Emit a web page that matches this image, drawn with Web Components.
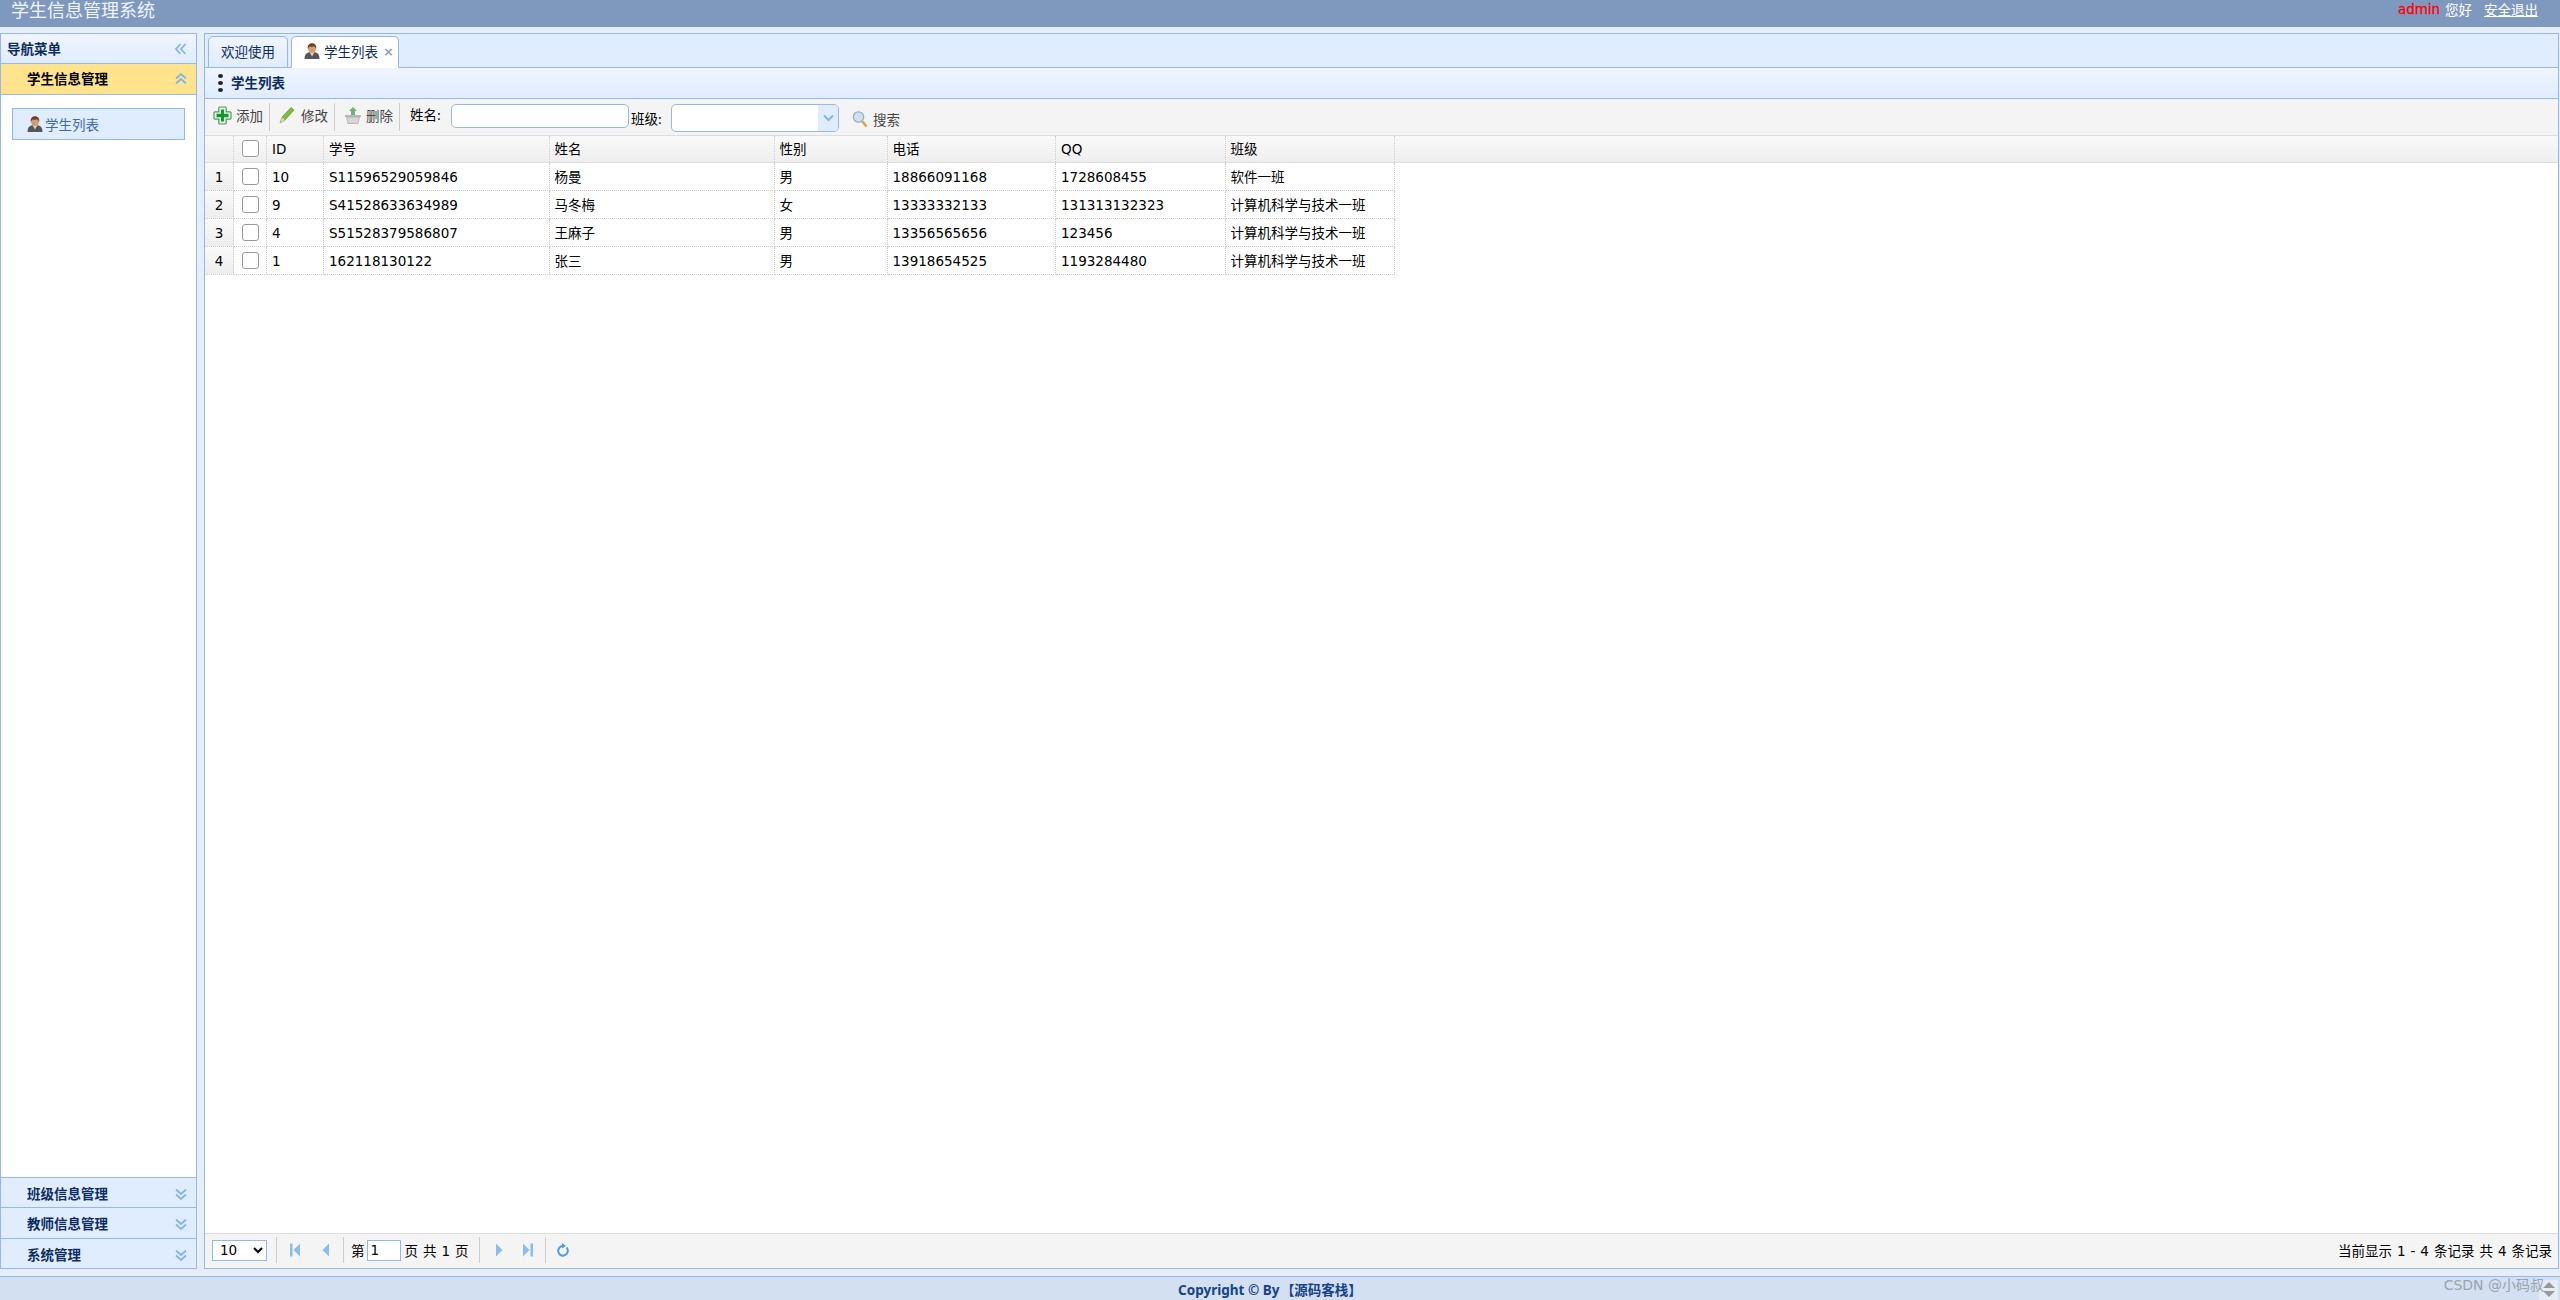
<!DOCTYPE html>
<html lang="zh"><head><meta charset="utf-8"><title>学生信息管理系统</title>
<style>
html,body{margin:0;height:1300px;overflow:hidden;background:#E6EEF8;font:13.33px "DejaVu Sans","Noto Sans CJK SC",sans-serif}
body{display:flex;flex-direction:column}
</style></head><body>
<app-header></app-header>
<app-body>
  <side-nav></side-nav>
  <main-panel></main-panel>
</app-body>
<app-footer></app-footer>
<script>
const FONT='"DejaVu Sans","Noto Sans CJK SC",sans-serif';
const CJK='"Noto Sans CJK SC","DejaVu Sans",sans-serif';
const person=s=>`<svg width="${s}" height="${s}" viewBox="0 0 16 16" style="flex:none;display:block"><path d="M.5 16c0-4 1.500-6.300 4.500-6.800h6c3 .5 4.500 2.800 4.500 6.800z" fill="#55565b"/><path d="M5.500 9h5L8 13.500z" fill="#e6d3c2"/><ellipse cx="8" cy="5.500" rx="4" ry="4.500" fill="#d49a72"/><path d="M3.800 6C3.200 1.800 5.800 .3 8 .3s4.800 1.500 4.200 5.700c-.4-1.600-1.400-2.400-2.300-2.800-1.500.7-3.200.7-4.300.4C5 4.200 4.200 5 3.800 6z" fill="#744020"/></svg>`;
const dbl=(dir,c='#7DB6EE')=>{const r={up:0,down:180,left:-90}[dir];return `<svg class="ch" width="12" height="12" viewBox="0 0 12 12" style="transform:rotate(${r}deg);display:block"><path d="M1 5.500L6 1l5 4.500M1 10.500L6 6l5 4.500" fill="none" stroke="${c}" stroke-width="1.700"/></svg>`};
function def(name,css,html){customElements.define(name,class extends HTMLElement{
  constructor(){super();const s=this.attachShadow({mode:'open'});s.innerHTML=`<style>${css}</style>`+(typeof html==='function'?html(this):html);}
})}

def('app-header',`:host{display:flex;flex:none;height:27px;background:#7F99BE;color:#fff;align-items:flex-start;justify-content:space-between;overflow:hidden;padding:0 22px 0 11px;font-family:${CJK}}
.t{font-size:18px;line-height:19px;color:#EFF5FF}
.r{display:flex;align-items:center;font-size:13.5px;line-height:19px}
b{color:#f00;font:400 13.4px/19px "DejaVu Sans",sans-serif;-webkit-text-stroke:.3px #f00;margin-right:5px}
a{color:#fff;text-decoration:underline;margin-left:12px}`,
`<div class="t">学生信息管理系统</div><div class="r"><b>admin</b><span>您好</span><a>安全退出</a></div>`);

def('app-body',`:host{display:flex;flex:none;height:1236px;margin-top:6px;gap:7px;padding-right:1px}`,`<slot></slot>`);

def('acc-head',`:host{display:flex;flex:none;align-items:center;justify-content:space-between;box-sizing:border-box;height:31px;padding:0 9px 0 26px;background:#E0ECFF;color:#0E2D5F;border-bottom:1px solid #95B8E7;font:bold 13.5px ${CJK}}
:host([sel]){background:#FFE48D;color:#000}
:host(:not([sel])) .ch{margin-top:2px}
:host([sel]) span{margin-top:-2px}
:host([last]) span{margin-top:1px}`,
h=>`<span><slot></slot></span>${dbl(h.hasAttribute('sel')?'up':'down')}`);

def('side-nav',`:host{display:flex;flex-direction:column;flex:none;box-sizing:border-box;width:197px;border:1px solid #95B8E7;background:#fff}
.h{flex:none;height:30px;box-sizing:border-box;display:flex;align-items:center;justify-content:space-between;padding:0 9px 0 6px;background:linear-gradient(#EFF5FF,#E0ECFF);border-bottom:1px solid #95B8E7;font:bold 13.5px ${CJK};color:#0E2D5F}
.h span{margin-top:-2px}
.b{flex:1;padding:13px 11px}
.i{display:flex;align-items:center;box-sizing:border-box;height:32px;padding-left:14px;gap:2px;background:#E0ECFF;border:1px solid #95B8E7;color:#416AA3;font:13.5px ${CJK}}`,
`<div class="h"><span>导航菜单</span>${dbl('left')}</div>
<acc-head sel>学生信息管理</acc-head>
<div class="b"><div class="i">${person(16)}<span>学生列表</span></div></div>
<acc-head style="border-top:1px solid #95B8E7">班级信息管理</acc-head>
<acc-head>教师信息管理</acc-head>
<acc-head last style="height:29px;border-bottom:0">系统管理</acc-head>`);

def('tab-bar',`:host{display:flex;flex:none;align-items:flex-end;height:34px;box-sizing:border-box;background:#E0ECFF;padding-left:3px;gap:3px;border-bottom:1px solid #95B8E7;font:13.5px ${CJK};color:#0E2D5F;white-space:nowrap}
.t{display:flex;flex:none;align-items:center;box-sizing:border-box;height:32px;margin-bottom:-1px;border:1px solid #95B8E7;border-radius:5px 5px 0 0;background:linear-gradient(#EFF5FF,#E0ECFF);padding:0 0 2px 12px;width:80px}
.s{background:#fff;border-bottom-color:#fff;width:108px;gap:4px}
.x{color:#8AA0BF;font:bold 13px "DejaVu Sans";margin-left:1px}`,
`<div class="t">欢迎使用</div><div class="t s">${person(16)}<span>学生列表</span><span class="x">×</span></div>`);

def('panel-title',`:host{display:flex;flex:none;align-items:center;height:31px;box-sizing:border-box;background:linear-gradient(#EFF5FF,#E0ECFF);border-bottom:1px solid #95B8E7;padding-left:13px;gap:8px;font:bold 13.5px ${CJK};color:#0E2D5F}
i{display:flex;flex-direction:column;gap:3px}i u{display:block;width:5px;height:4px;border-radius:50%;background:#222}
span{margin-top:-2px}`,
`<i><u></u><u></u><u></u></i><span><slot></slot></span>`);

def('tool-bar',`:host{display:flex;flex:none;align-items:flex-start;height:36px;box-sizing:border-box;background:#F4F4F4;padding:4px 0 0 8px;font:13.5px ${CJK}}
.b{display:flex;align-items:center;gap:4px;color:#444;height:24px;line-height:21px}
.sep{flex:none;width:1px;height:28px;background:#ccc}
.lab{color:#000;height:24px;line-height:22px}
input{box-sizing:border-box;border:1px solid #95B8E7;border-radius:5px;background:#fff;outline:0;padding:0}
.combo{box-sizing:border-box;display:flex;width:168px;height:28px;border:1px solid #95B8E7;border-radius:5px;background:#fff;overflow:hidden;margin-top:1px}
.combo span{margin-left:auto;width:20px;background:#E0ECFF;display:flex;align-items:center;justify-content:center}`,
`<div class="b" style="width:56px"><svg width="19" height="19" viewBox="0 0 19 19"><path d="M6.500 1h6l.7.700V5.800h4.100l.7.700v6l-.7.700h-4.100v4.100l-.7.700h-6l-.7-.700v-4.100H1.700L1 12.500v-6l.7-.700h4.100V1.700z" fill="#E6F3E4" stroke="#4E9A5C" stroke-width="1.200"/><path d="M8 3.500h3v4.300h4.500v3.400H11v4.300H8v-4.300H3.500V7.800H8z" fill="#0E9A2E"/></svg>添加</div>
<div class="sep"></div>
<div class="b" style="width:56px;margin-left:9px;gap:6px"><svg width="16" height="18" viewBox="0 0 16 18"><path d="M1 17l2-6L12 1.500l3 2.500L6 14z" fill="#7DBB3C" stroke="#5a9a2a" stroke-width=".7"/><path d="M1 17l2-6 3 3z" fill="#d9d4a8"/></svg>修改</div>
<div class="sep" style="margin-left:-1px"></div>
<div class="b" style="width:56px;margin-left:9px"><svg width="18" height="19" viewBox="0 0 18 19"><path d="M9 1l4 4h-2v4H7V5H5z" fill="#6DB56D"/><path d="M1 9h16v2H1z" fill="#b9b9b9"/><path d="M2.500 11h13l-1.500 6.500H4z" fill="#d6d6d6" stroke="#aaa" stroke-width=".8"/></svg>删除</div>
<div class="sep" style="margin-left:-1px"></div>
<div class="lab" style="margin-left:10px;width:41px">姓名:</div>
<input style="width:178px;height:24px;margin-top:1px">
<div class="lab" style="margin:4px 0 0 2px;width:40px">班级:</div>
<div class="combo"><span><svg width="11" height="8" viewBox="0 0 11 8"><path d="M1 1.500l4.500 4.500L10 1.500" fill="none" stroke="#7DB6EE" stroke-width="2"/></svg></span></div>
<div class="b" style="margin:4px 0 0 13px;gap:5px"><svg width="16" height="18" viewBox="0 0 16 18"><circle cx="6.500" cy="7" r="5.200" fill="#CFE0F2" stroke="#9aaec4" stroke-width="1.300"/><path d="M10.500 11.500l4 5" stroke="#E0A040" stroke-width="2.500"/></svg>搜索</div>`);

const rows=[[1,10,'S11596529059846','杨曼','男','18866091168','1728608455','软件一班'],
[2,9,'S41528633634989','马冬梅','女','13333332133','131313132323','计算机科学与技术一班'],
[3,4,'S51528379586807','王麻子','男','13356565656','123456','计算机科学与技术一班'],
[4,1,'162118130122','张三','男','13918654525','1193284480','计算机科学与技术一班']];
const cols='29px 33px 57px 225.500px 225px 113px 168.500px 169.500px 169.500px';
const cell=(t,cn='')=>`<div class="c ${cn}">${t}</div>`;
const row=(r)=>`<div class="r">`+cell(r[0],'n')+cell('<input type="checkbox">','k')+r.slice(1).map(t=>cell(t)).join('')+`</div>`;
def('data-grid',`:host{display:block;flex:1;background:#fff;font:13.5px ${FONT};color:#000;min-height:0}
.r{display:grid;grid-template-columns:${cols};width:max-content;height:28px;box-sizing:border-box}
.c{box-sizing:border-box;height:28px;padding:0 5px;line-height:29px;white-space:nowrap;overflow:hidden;border-right:1px dotted #ccc;border-bottom:1px dotted #ccc}
.h{background:linear-gradient(#F9F9F9,#EFEFEF);width:100%;border-top:1px solid #ddd;border-bottom:1px solid #ddd}
.h .c{border-bottom:0;height:26px;line-height:27px}
.n{background:linear-gradient(#FAFAFA,#EDEDED);text-align:center;padding:0}
.h .n{background:none}
.k{padding:5px 0 0 0;text-align:center}
.h .k{padding-top:4px}
input{appearance:none;display:block;margin:0 auto;width:17px;height:17px;box-sizing:border-box;border:1.500px solid #9a9a9a;border-radius:3px;background:#fff}`,
`<div class="r h">${cell('','n')}${cell('<input type="checkbox">','k')}${['ID','学号','姓名','性别','电话','QQ','班级'].map(t=>cell(t)).join('')}</div>`+rows.map(r=>row(r)).join(''));

const pi={first:'<path d="M1 1.500h2.500v13H1zM11 1.500v13L4.500 8z"/>',prev:'<path d="M9 1.500v13L2.500 8z"/>',next:'<path d="M3 1.500v13L9.500 8z"/>',last:'<path d="M1 1.500v13L7.500 8zM8.500 1.500H11v13H8.500z"/>'};
const pic=k=>`<svg width="12" height="16" viewBox="0 0 12 16" fill="#8ABDEE">${pi[k]}</svg>`;
def('pager-bar',`:host{display:flex;flex:none;align-items:center;justify-content:space-between;height:35px;box-sizing:border-box;background:#F4F4F4;border-top:1px solid #ddd;padding:0 6px 2px 7px;font:13.5px ${FONT};color:#000}
.l{display:flex;align-items:center}
.sep{flex:none;width:1px;height:26px;background:#ccc}
select{width:55px;height:21px;box-sizing:border-box;border:1px solid #95B8E7;background:#fff;font:13.5px ${FONT};padding:0 0 0 3px;outline:0;border-radius:0}
input{width:34px;height:21px;box-sizing:border-box;border:1px solid #95B8E7;outline:0;padding:0 0 0 3px;font:13.5px ${FONT};margin:0 4px 0 2px}
svg{display:block;flex:none}
.w{word-spacing:.7px}`,
`<div class="l"><select><option>10</option><option>20</option></select><div class="sep" style="margin-left:9px"></div>
<span style="margin-left:12px">${pic('first')}</span><span style="margin-left:19px">${pic('prev')}</span><div class="sep" style="margin:0 7px 0 11px"></div>
<span>第</span><input value="1"><span class="w">页 共 1 页</span><div class="sep" style="margin:0 13px 0 10px"></div>
<span>${pic('next')}</span><span style="margin-left:17px">${pic('last')}</span><div class="sep" style="margin:0 10px 0 11px"></div>
<svg width="14" height="14" viewBox="0 0 14 14"><path d="M7 3a4.800 4.800 0 1 0 3.500 1.500" fill="none" stroke="#4D9DE0" stroke-width="2"/><path d="M6 0l4 3-4 2.500z" fill="#4D9DE0"/></svg></div>
<div class="w">当前显示 1 - 4 条记录 共 4 条记录</div>`);

def('main-panel',`:host{display:flex;flex-direction:column;flex:1;min-width:0;box-sizing:border-box;border:1px solid #95B8E7;background:#fff}`,
`<tab-bar></tab-bar><panel-title>学生列表</panel-title><tool-bar></tool-bar><data-grid></data-grid><pager-bar></pager-bar>`);

def('app-footer',`:host{display:flex;flex:none;box-sizing:border-box;height:24px;margin-top:7px;background:#D2E0F2;border-top:1px solid #95B8E7;justify-content:center;align-items:center;position:relative;color:#15428B;font:bold 13.5px "Noto Sans","Noto Sans CJK SC",sans-serif}
.t{margin-left:-20px}
.c{font-size:13.5px;font-family:${CJK};margin-left:-2px}
.w{position:absolute;right:16px;top:-3px;color:#9aa3ad;font:14px ${FONT};font-weight:400;z-index:1}
.s{position:absolute;right:2px;top:3px;bottom:0;width:19px;background:#E4ECF6;display:flex;flex-direction:column;align-items:center;gap:3px;padding-top:2px}
.s i{display:block;border:6px solid transparent;border-top:0;border-bottom:6px solid #999}
.s i+i{border-bottom:0;border-top:6px solid #999}`,
`<span class="t">Copyright © By <span class="c">【源码客栈】</span></span><div class="s"><i></i><i></i></div><div class="w">CSDN @小码叔</div>`);
</script></body></html>
